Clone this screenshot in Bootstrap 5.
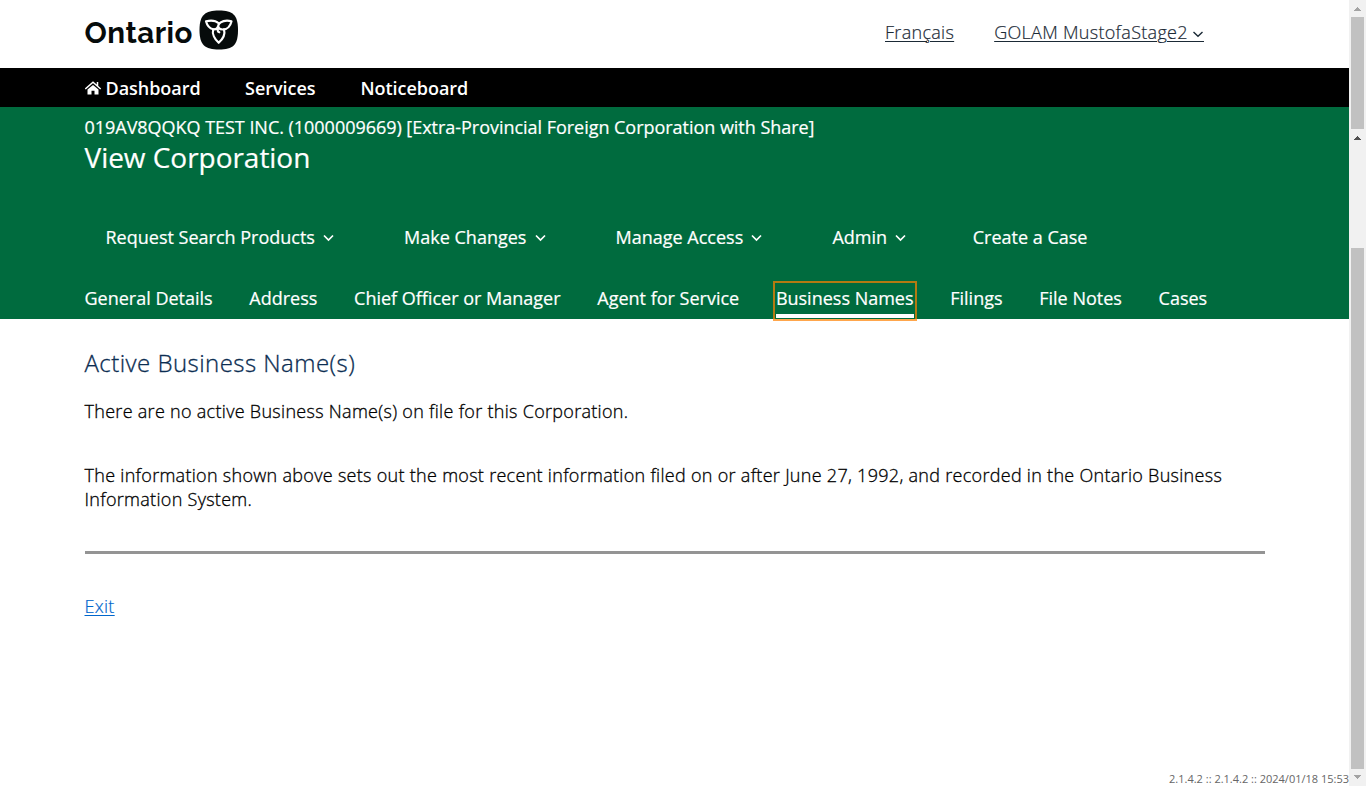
<!DOCTYPE html>
<html lang="en">
<head>
<meta charset="utf-8">
<meta name="viewport" content="width=device-width, initial-scale=1">
<title>View Corporation</title>
<link href="https://cdn.jsdelivr.net/npm/bootstrap@5.3.0/dist/css/bootstrap.min.css" rel="stylesheet">
<style>
body{font-family:"Open Sans","Noto Sans",sans-serif;font-size:18px;line-height:24px;color:#000;height:786px;overflow:hidden}
.wrap{padding-left:84.5px}
.top-bar{height:68px}
.logo-word{font-family:"Raleway","Montserrat","Lato",sans-serif;font-weight:700;font-size:29.5px;line-height:40px;color:#060b0b;width:114.5px;letter-spacing:.5px}
.user-links a{color:#1b2a36;font-weight:300;letter-spacing:.3px;text-underline-offset:2px;text-decoration-thickness:1px;-webkit-text-stroke:.2px currentColor}
.link-caret{vertical-align:-3px;margin-left:-.5px}
.main-nav{height:39px;background:#000;font-weight:600;letter-spacing:-.04px}
.main-nav a,.green a{color:#fff;text-decoration:none;white-space:nowrap}
.green{height:212px;background:#006b3e;color:#fff;-webkit-text-stroke:.2px #fff}
.corp-name{letter-spacing:-.03px}
.page-title{font-size:28px;line-height:34px;font-weight:400;letter-spacing:-.04px}
.menu-caret{margin:-2px 0 0 3.500px}
.tabs-row .active-tab{outline:2px solid rgba(255,128,0,.7);outline-offset:1px;border-bottom:4px solid #fff}
.tabs-row a{height:34px;line-height:28px}
.section-title{font-size:24px;line-height:32px;font-weight:300;color:#0b2d52;letter-spacing:.46px;-webkit-text-stroke:.3px currentColor}
.copy{font-weight:300;width:1180px;letter-spacing:.293px;-webkit-text-stroke:.3px currentColor}
.rule{height:3px;width:1180px;margin-left:.5px;background:#949494}
.exit-link{color:#0066cc;font-weight:300;letter-spacing:.3px;text-underline-offset:2px;text-decoration-thickness:1px;-webkit-text-stroke:.2px currentColor}
.version{font-size:11px;line-height:14px;color:#666}
.scroll-col{width:17px;background:#f1f1f1;flex:none}
.thumb{width:13px;background:#c1c1c1}
</style>
</head>
<body class="d-flex bg-white">
<div class="d-flex flex-column flex-grow-1">
  <header class="top-bar wrap d-flex">
    <div class="d-flex pt-2">
      <span class="logo-word" style="padding-top:5px">Ontario</span>
      <svg width="40" height="40" viewBox="0 0 40 40" style="margin-top:2px"><path d="M20 .5C34 .5 39 5 39 20S34 39.500 20 39.500 .5 35 .5 20 6 .5 20 .5Z" fill="#060b0b"/><g fill="none" stroke="#fff" stroke-width="2.200" stroke-linejoin="round" stroke-linecap="round"><path d="M19.700 13.200C16.500 10.300 12 10 7 11.200C8 15 10.300 18.300 14.200 19.300"/><path d="M19.700 18C18 14.500 22.500 9 32.500 11.200C31.500 15.500 28.500 19.500 24 19.500C22 19.500 20.500 19 19.700 18"/><path d="M14.200 19.300C13 23.500 15.500 29 19.700 32.800C24 29 26.300 24 25 19.300M14.200 19.300C16.500 19.500 18.500 18.500 19 16.500M19.700 18C18 19.500 18.500 21.800 20.300 22.300"/></g></svg>
    </div>
    <div class="user-links d-flex" style="margin-left:646px;padding-top:20px;gap:40px">
      <a href="#">Français</a>
      <a href="#">GOLAM MustofaStage2&nbsp;<svg class="link-caret" width="12" height="14" viewBox="0 0 12 14"><path d="M1.500 4l4.500 4.300L10.500 4" fill="none" stroke="currentColor" stroke-width="1.400"/><path d="M0 13.500h12" stroke="currentColor"/></svg></a>
    </div>
  </header>
  <nav class="main-nav wrap d-flex align-items-center">
    <a href="#" class="d-flex align-items-center"><svg width="17" height="14" viewBox="0.500 0 17 14" style="margin-right:4px"><path d="M8.500 4L3 8.500v5h4V9.800h3v3.700h4v-5Z" fill="#fff"/><path d="M.8 8L8.500 1.300l7.700 6.700M13 1v4" fill="none" stroke="#fff" stroke-width="1.500"/></svg>Dashboard</a>
    <a href="#" style="margin-left:44.500px">Services</a>
    <a href="#" style="margin-left:45px">Noticeboard</a>
  </nav>
  <section class="green wrap">
    <div class="corp-name" style="padding-top:8px">019AV8QQKQ TEST INC. (1000009669) [Extra-Provincial Foreign Corporation with Share]</div>
    <h1 class="page-title mb-0" style="padding-top:1px">View Corporation</h1>
    <div class="d-flex" style="padding:51px 0 0 21px;gap:70px">
      <a href="#">Request Search Products <svg class="menu-caret" width="11" height="8" viewBox="0 0 11 8"><path d="M1 1.500l4.500 4.500L10 1.500" fill="none" stroke="currentColor" stroke-width="1.700"/></svg></a>
      <a href="#">Make Changes <svg class="menu-caret" width="11" height="8" viewBox="0 0 11 8"><path d="M1 1.500l4.500 4.500L10 1.500" fill="none" stroke="currentColor" stroke-width="1.700"/></svg></a>
      <a href="#">Manage Access <svg class="menu-caret" width="11" height="8" viewBox="0 0 11 8"><path d="M1 1.500l4.500 4.500L10 1.500" fill="none" stroke="currentColor" stroke-width="1.700"/></svg></a>
      <a href="#">Admin <svg class="menu-caret" width="11" height="8" viewBox="0 0 11 8"><path d="M1 1.500l4.500 4.500L10 1.500" fill="none" stroke="currentColor" stroke-width="1.700"/></svg></a>
      <a href="#" style="margin-left:-3.500px">Create a Case</a>
    </div>
    <div class="tabs-row d-flex" style="padding-top:35px;gap:36.700px">
      <a href="#">General Details</a><a href="#">Address</a><a href="#">Chief Officer or Manager</a><a href="#">Agent for Service</a><a href="#" class="active-tab">Business Names</a><a href="#">Filings</a><a href="#">File Notes</a><a href="#">Cases</a>
    </div>
  </section>
  <main class="wrap flex-grow-1">
    <h2 class="section-title mb-0" style="padding-top:28px">Active Business Name(s)</h2>
    <p class="copy mb-0" style="padding-top:20px">There are no active Business Name(s) on file for this Corporation.</p>
    <p class="copy mb-0" style="padding-top:40px">The information shown above sets out the most recent information filed on or after June 27, 1992, and recorded in the Ontario Business Information System.</p>
    <div class="rule" style="margin-top:40px"></div>
    <div style="padding-top:40px"><a href="#" class="exit-link">Exit</a></div>
  </main>
  <footer class="version text-end">2.1.4.2 :: 2.1.4.2 :: 2024/01/18 15:53</footer>
</div>
<aside class="scroll-col d-flex flex-column align-items-center">
  <svg width="17" height="17" shape-rendering="crispEdges"><path d="M5 11L8.500 7L12 11Z" fill="#a3a3a3"/></svg>
  <div class="thumb" style="height:112px"></div>
  <svg width="17" height="17" shape-rendering="crispEdges"><path d="M5 11L8.500 7L12 11Z" fill="#505050"/></svg>
  <div class="thumb" style="height:521px;margin-top:102px"></div>
  <svg width="17" height="17" shape-rendering="crispEdges"><path d="M5 6L8.500 10L12 6Z" fill="#a3a3a3"/></svg>
</aside>
<script src="https://cdn.jsdelivr.net/npm/bootstrap@5.3.0/dist/js/bootstrap.bundle.min.js"></script>
</body>
</html>
